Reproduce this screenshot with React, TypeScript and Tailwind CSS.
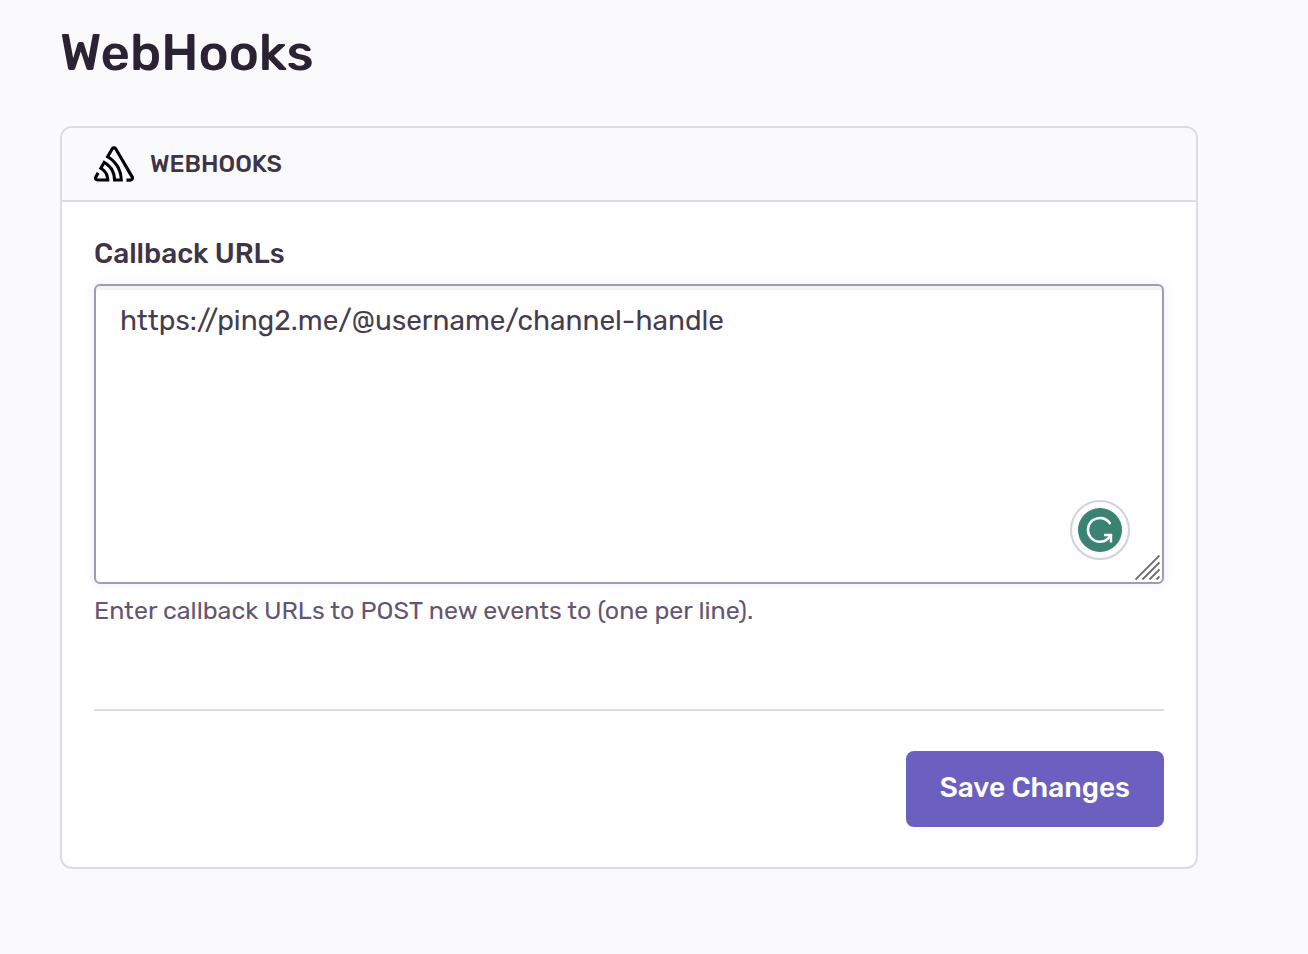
import { SiSentry } from "react-icons/si";

function GrammarBadge() {
  return (
    <button
      type="button"
      aria-label="Check grammar"
      className="absolute right-[34px] bottom-6 flex size-[60px] items-center justify-center rounded-full border-2 border-[#d2d1de] bg-white"
    >
      <svg viewBox="0 0 44 44" className="size-11 shrink-0" fill="none" aria-hidden="true">
        <circle cx="22" cy="22" r="22" fill="#3a8373" />
        <path
          d="M31.8 15.2A11.9 11.9 0 1 0 30 30.6L33 27.2"
          stroke="#fff"
          strokeWidth="2.6"
          strokeLinecap="round"
        />
        <path d="M26 27H33V34.4" stroke="#fff" strokeWidth="2.4" />
      </svg>
    </button>
  );
}

function ResizeGrip() {
  return (
    <svg
      viewBox="0 0 25 25"
      className="pointer-events-none absolute right-1 bottom-1 size-[25px]"
      fill="none"
      stroke="#6b6b6b"
      strokeWidth="1.9"
      aria-hidden="true"
    >
      <path d="M0.5 24.5L24.5 0.5M7.5 24.5L24.5 7.5M14.5 24.5L24.5 14.5M21.5 24.5L24.5 21.5" />
    </svg>
  );
}

export default function App() {
  return (
    <main className="min-h-screen bg-[#fafafd] pt-6 pr-[110px] pb-20 pl-[60px] font-['Rubik','Roboto',sans-serif] text-[#3e3446]">
      <h1 className="text-[51px] leading-[58px] font-medium text-[#2b2233]">WebHooks</h1>

      <section className="mt-11 rounded-xl border-2 border-[#dddce4] bg-white">
        <header className="flex h-[74px] items-center gap-4 rounded-t-[10px] border-b-2 border-[#dddce4] bg-[#fafafd] px-8">
          <SiSentry className="size-10 text-black" aria-hidden="true" />
          <h2 className="text-2xl font-medium uppercase">WebHooks</h2>
        </header>

        <form className="px-8 pt-8 pb-10" onSubmit={(e) => e.preventDefault()}>
          <label htmlFor="callback-urls" className="block text-[28px] leading-10 font-medium">
            Callback URLs
          </label>
          <div className="relative mt-[10px]">
            <textarea
              id="callback-urls"
              aria-describedby="callback-help"
              spellCheck={false}
              defaultValue="https://ping2.me/@username/channel-handle"
              className="block h-[300px] w-full resize-none rounded-md border-2 border-[#a398b5] bg-white px-6 py-4 text-[28px] leading-[38px] text-[#463c4f] shadow-[inset_0_4px_0_#f4f4f5,0_0_12px_#6c5fc71f] outline-none"
            />
            <GrammarBadge />
            <ResizeGrip />
          </div>
          <p id="callback-help" className="mt-2 text-[25px] leading-[38px] text-[#645574]">
            Enter callback URLs to POST new events to (one per line).
          </p>

          <div className="mt-[79px] flex justify-end border-t-2 border-[#dddce4] pt-10">
            <button
              type="submit"
              className="h-[76px] rounded-lg bg-[#6b5fc0] px-[34px] pb-[2px] text-[28px] font-medium text-white shadow-[0_4px_2px_#00000005]"
            >
              Save Changes
            </button>
          </div>
        </form>
      </section>
    </main>
  );
}
